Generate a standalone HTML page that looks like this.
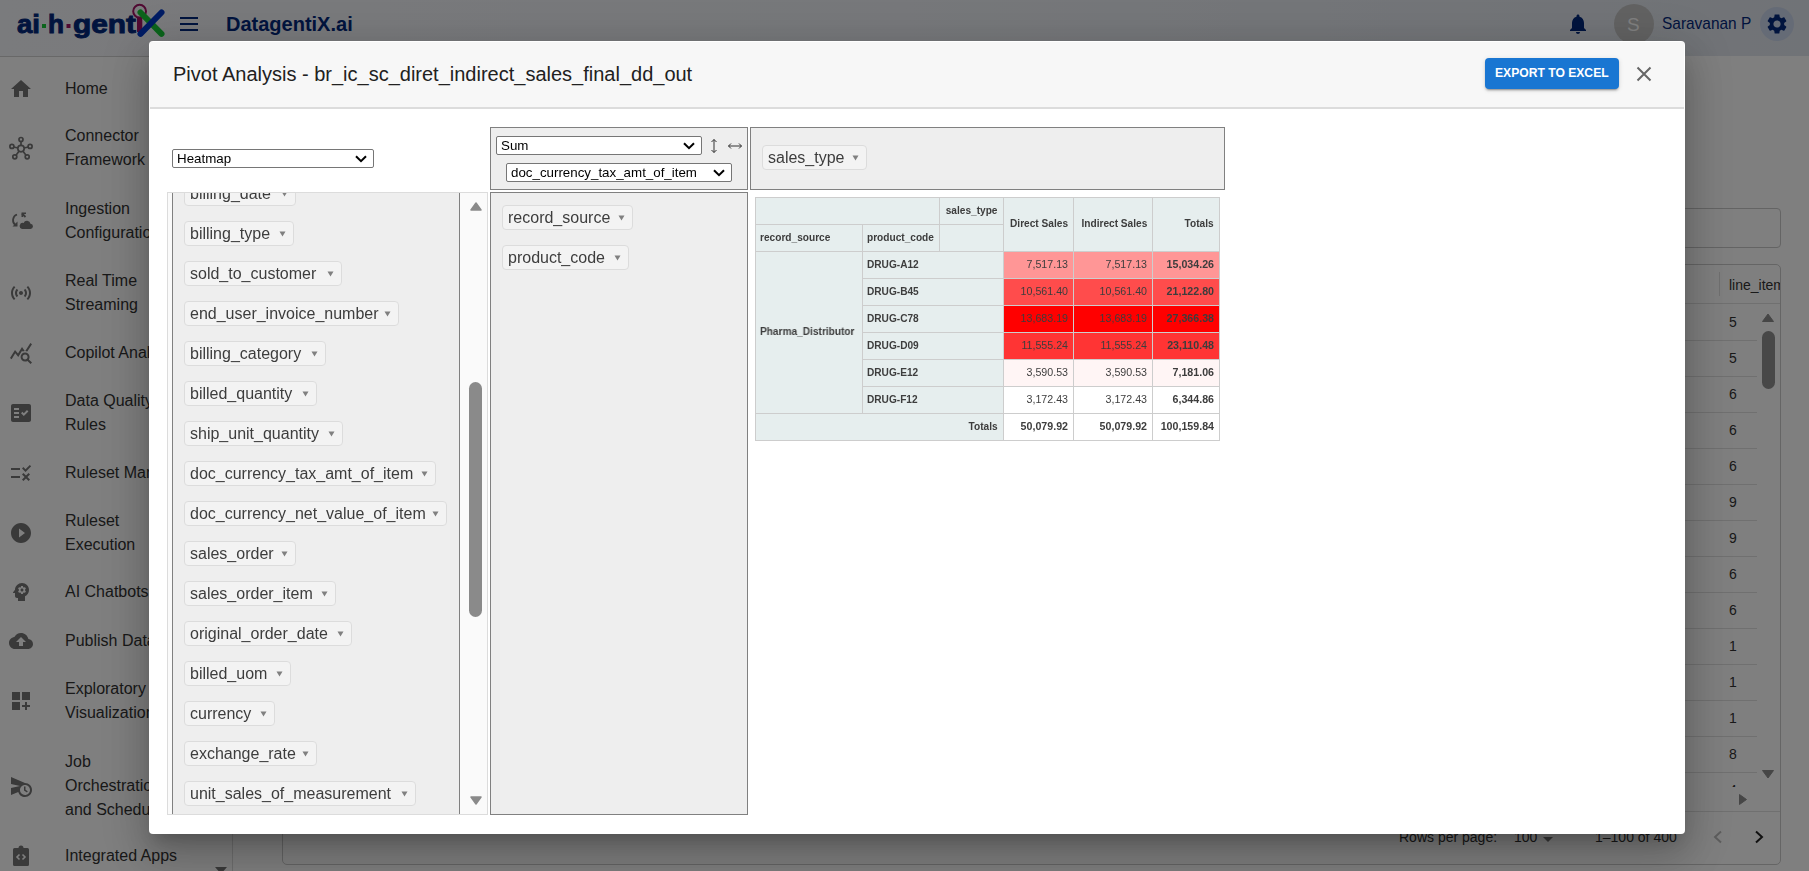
<!DOCTYPE html>
<html><head><meta charset="utf-8">
<style>
*{box-sizing:border-box;}
html,body{margin:0;padding:0;width:1809px;height:871px;overflow:hidden;background:#fff;font-family:"Liberation Sans",sans-serif;}
.a{position:absolute;}
.t{position:absolute;white-space:nowrap;line-height:1;}
#app{position:absolute;left:0;top:0;width:1809px;height:871px;background:#fff;}
#hdr{position:absolute;left:0;top:0;width:1809px;height:56px;background:linear-gradient(90deg,#f5f6fa 0%,#eef1f6 50%,#e1e6ee 100%);}
#side{position:absolute;left:0;top:56px;width:233px;height:815px;background:#fff;border-right:1px solid #dcdcdc;border-top:1px solid #d0d0d0;}
.nav{position:absolute;left:65px;font-size:16px;line-height:24px;color:#333;white-space:nowrap;}
.nic{position:absolute;left:9px;width:24px;height:24px;}
.nic{fill:#747474;}
#overlay{position:absolute;left:0;top:0;width:1809px;height:871px;background:rgba(0,0,0,0.5);}
#modal{position:absolute;left:149px;top:41px;width:1536px;height:793px;background:#fff;border-radius:4px;
 box-shadow:0px 11px 15px -7px rgba(0,0,0,0.2),0px 24px 38px 3px rgba(0,0,0,0.14),0px 9px 46px 8px rgba(0,0,0,0.12);overflow:hidden;}
#mhead{position:absolute;left:0;top:0;width:1536px;height:67px;background:#f7f7f7;border-bottom:2px solid #e2e2e2;}
.navy{color:#03287c;}
.row5{position:absolute;left:1729px;font-size:14px;color:#333;}
.rline{position:absolute;left:282px;width:1475px;height:1px;background:#e0e0e0;}

#mhead{position:absolute;left:1px;top:1px;width:1534px;height:67px;background:#f7f7f7;border-bottom:2px solid #dcdcdc;}
.sel{position:absolute;background:#fff;border:1px solid #767676;border-radius:2px;font-size:13.33px;color:#000;line-height:17px;padding-left:4px;white-space:nowrap;}
.sel svg{position:absolute;right:6px;top:5px;}
.cell{position:absolute;background:#eeeeee;border:1px solid #808080;}
.pill{position:absolute;height:25px;background:#f3f3f3;border:1px solid #dcdcdc;border-radius:4px;font-size:16px;color:#3d3d3d;white-space:nowrap;line-height:24px;padding-left:5px;}
.pill .tri{display:block;}
.pt{position:absolute;}
.hb{position:absolute;background:#e6eeee;}
.ln{position:absolute;background:#cdcdcd;}
.tx{position:absolute;white-space:nowrap;font-size:10.67px;line-height:1;color:#3d3d3d;}
.b{font-weight:bold;transform:scaleX(0.95);}
.nb{font-weight:bold;}
.tx[style*='right']{transform-origin:100% 0;}
.tx[style*='left']{transform-origin:0 0;}

</style></head><body>
<div id="app">
  <div id="hdr">
    <svg class="a" style="left:0;top:0" width="180" height="56" viewBox="0 0 180 56">
      <g fill="#03287c" stroke="#03287c" stroke-width="0.9">
        <text x="17" y="32.6" font-family="Liberation Sans" font-weight="bold" font-size="25" textLength="23" lengthAdjust="spacingAndGlyphs">ai</text>
        <text x="48" y="32.6" font-family="Liberation Sans" font-weight="bold" font-size="25" textLength="16" lengthAdjust="spacingAndGlyphs">h</text>
        <text x="73" y="32.6" font-family="Liberation Sans" font-weight="bold" font-size="25" textLength="63" lengthAdjust="spacingAndGlyphs">gent</text>
      </g>
      <rect x="42" y="24" width="4" height="4" fill="#18c838"/>
      <rect x="66.5" y="24" width="4" height="4" fill="#a01464"/>
      <rect x="137" y="18" width="5.3" height="14" fill="#a01464"/>
      <circle cx="139.6" cy="11.2" r="6.4" fill="none" stroke="#a01464" stroke-width="2"/>
      <line x1="140.5" y1="12.5" x2="161.5" y2="33.8" stroke="#18c838" stroke-width="6" stroke-linecap="round"/>
      <line x1="161.5" y1="12.5" x2="140.5" y2="33.8" stroke="#0038c8" stroke-width="6" stroke-linecap="round"/>
    </svg>
    <div class="a" style="left:180px;top:17px;width:18px;height:2px;background:#03287c"></div>
    <div class="a" style="left:180px;top:23px;width:18px;height:2px;background:#03287c"></div>
    <div class="a" style="left:180px;top:29px;width:18px;height:2px;background:#03287c"></div>
    <div class="t navy" id="brand" style="left:226px;top:14px;font-size:20px;font-weight:bold;">DatagentiX.ai</div>
    <svg class="a" style="left:1566px;top:12px" width="24" height="24" viewBox="0 0 24 24"><path fill="#03287c" d="M12 22c1.1 0 2-.9 2-2h-4c0 1.1.89 2 2 2zm6-6v-5c0-3.07-1.64-5.64-4.5-6.32V4c0-.83-.67-1.5-1.5-1.5s-1.5.67-1.5 1.5v.68C7.63 5.36 6 7.92 6 11v5l-2 2v1h16v-1l-2-2z"/></svg>
    <div class="a" style="left:1614px;top:4px;width:40px;height:40px;border-radius:50%;background:#c4c4c4;"></div>
    <div class="t" style="left:1627px;top:15px;font-size:19px;color:#fff;">S</div>
    <div class="t navy" id="uname" style="left:1662px;top:15px;font-size:17px;transform:scaleX(0.908);transform-origin:0 0;">Saravanan P</div>
    <div class="a" style="left:1760px;top:7px;width:34px;height:34px;border-radius:50%;background:#cbd6ec;"></div>
    <svg class="a" style="left:1765px;top:12px" width="24" height="24" viewBox="0 0 24 24"><path fill="#03287c" d="M19.14 12.94c.04-.3.06-.61.06-.94 0-.32-.02-.64-.07-.94l2.03-1.58c.18-.14.23-.41.12-.61l-1.92-3.32c-.12-.22-.37-.29-.59-.22l-2.39.96c-.5-.38-1.03-.7-1.62-.94l-.36-2.54c-.04-.24-.24-.41-.48-.41h-3.84c-.24 0-.43.17-.47.41l-.36 2.54c-.59.24-1.13.57-1.62.94l-2.39-.96c-.22-.08-.47 0-.59.22L2.74 8.87c-.12.21-.08.47.12.61l2.03 1.58c-.05.3-.09.63-.09.94s.02.64.07.94l-2.03 1.58c-.18.14-.23.41-.12.61l1.92 3.32c.12.22.37.29.59.22l2.39-.96c.5.38 1.03.7 1.62.94l.36 2.54c.05.24.24.41.48.41h3.84c.24 0 .44-.17.47-.41l.36-2.54c.59-.24 1.13-.56 1.62-.94l2.39.96c.22.08.47 0 .59-.22l1.92-3.32c.12-.22.07-.47-.12-.61l-2.01-1.58zM12 15.6c-1.98 0-3.6-1.62-3.6-3.6s1.62-3.6 3.6-3.6 3.6 1.62 3.6 3.6-1.62 3.6-3.6 3.6z"/></svg>
  </div>
  <div id="side">
    <svg class="nic" style="top:19.5px" viewBox="0 0 24 24"><path d="M10 20v-6h4v6h5v-8h3L12 3 2 12h3v8z"/></svg>
    <div class="nav" style="top:19.5px">Home</div>

    <svg class="nic" style="top:79px" viewBox="0 0 24 24"><g style="fill:none" stroke="#747474" stroke-width="1.7"><circle cx="12" cy="12.6" r="3.2"/><circle cx="12" cy="3.5" r="2"/><circle cx="2.9" cy="10.4" r="2"/><circle cx="21.1" cy="10.4" r="2"/><circle cx="5.8" cy="20.8" r="2"/><circle cx="18.2" cy="20.8" r="2"/><path d="M12 5.5V9.4M4.8 11L8.9 12M19.2 11L15.1 12M7 19.2L10 15.3M17 19.2L14 15.3"/></g></svg>
    <div class="nav" style="top:67.0px">Connector<br>Framework</div>

    <svg class="nic" style="top:152px" viewBox="0 0 24 24"><g style="fill:none" stroke="#747474" stroke-width="1.8"><path d="M8 5.5A6 6 0 0 0 6.5 16"/><path d="M13 4.5l3.5 3.5"/></g><path d="M3.5 17.5h5v-5z" transform="rotate(0)"/><path d="M12.5 3.5h4.5v1.6h-2.9v2.9h-1.6z"/><path d="M13 20h8.2a2.6 2.6 0 0 0 .3-5.2 3.6 3.6 0 0 0-6.9-.8A2.9 2.9 0 0 0 13 20z"/></svg>
    <div class="nav" style="top:140.0px">Ingestion<br>Configuration</div>

    <svg class="nic" style="top:223.7px" viewBox="0 0 24 24"><path d="M7.76 16.24C6.67 15.16 6 13.66 6 12s.67-3.16 1.76-4.24l1.42 1.42C8.45 9.9 8 10.9 8 12c0 1.1.45 2.1 1.17 2.83l-1.41 1.41zm8.48 0C17.33 15.16 18 13.66 18 12s-.67-3.16-1.76-4.24l-1.42 1.42C15.55 9.9 16 10.9 16 12c0 1.1-.45 2.1-1.17 2.83l1.41 1.41zM12 10c-1.1 0-2 .9-2 2s.9 2 2 2 2-.9 2-2-.9-2-2-2zm8 2c0 2.21-.9 4.21-2.35 5.65l1.42 1.42C20.88 17.26 22 14.76 22 12s-1.12-5.26-2.93-7.07l-1.42 1.42C19.1 7.79 20 9.79 20 12zM6.35 6.35L4.93 4.93C3.12 6.74 2 9.24 2 12s1.12 5.26 2.93 7.07l1.42-1.42C4.9 16.21 4 14.21 4 12s.9-4.21 2.35-5.65z"/></svg>
    <div class="nav" style="top:211.7px">Real Time<br>Streaming</div>

    <svg class="nic" style="top:284px;left:8.5px" viewBox="0 0 24 24"><path d="M19.88 18.47c.44-.7.7-1.51.7-2.39 0-2.49-2.01-4.5-4.5-4.5s-4.5 2.01-4.5 4.5 2.01 4.5 4.49 4.5c.88 0 1.7-.26 2.39-.7L21.58 23 23 21.58l-3.12-3.11zm-3.8.11c-1.38 0-2.5-1.12-2.5-2.5s1.12-2.5 2.5-2.5 2.5 1.12 2.5 2.5-1.12 2.5-2.5 2.5zm-.36-8.5c-.74.02-1.45.18-2.1.45l-.55-.83-3.8 6.18-3.01-3.52-3.63 5.81L1 17l5-8 3 3.5L13 6l2.72 4.08zm2.59.5c-.64-.28-1.33-.45-2.05-.49L21.38 2 23 3.18l-4.69 7.4z"/></svg>
    <div class="nav" style="top:284.0px">Copilot Analytics</div>

    <svg class="nic" style="top:343.6px" viewBox="0 0 24 24"><path d="M20 3H4c-1.1 0-2 .9-2 2v14c0 1.1.9 2 2 2h16c1.1 0 2-.9 2-2V5c0-1.1-.9-2-2-2zM10 17H5v-2h5v2zm0-4H5v-2h5v2zm0-4H5V7h5v2zm4.82 6L12 12.16l1.41-1.41 1.41 1.42L17.99 9l1.42 1.42L14.82 15z"/></svg>
    <div class="nav" style="top:331.6px">Data Quality<br>Rules</div>

    <svg class="nic" style="top:404px" viewBox="0 0 24 24"><path d="M16.54 11L13 7.46l1.41-1.41 2.12 2.12 4.24-4.24 1.41 1.41L16.54 11zM11 7H2v2h9V7zm10 6.41L19.59 12 17 14.59 14.41 12 13 13.41 15.59 16 13 18.59 14.41 20 17 17.41 19.59 20 21 18.59 18.41 16 21 13.41zM11 15H2v2h9v-2z"/></svg>
    <div class="nav" style="top:404.0px">Ruleset Management</div>

    <svg class="nic" style="top:464px" viewBox="0 0 24 24"><path d="M12 2C6.48 2 2 6.48 2 12s4.48 10 10 10 10-4.48 10-10S17.52 2 12 2zm-2 14.5v-9l6 4.5-6 4.5z"/></svg>
    <div class="nav" style="top:452.0px">Ruleset<br>Execution</div>

    <svg class="nic" style="top:523px" viewBox="0 0 24 24"><path d="M13 3C9.23 3 6.19 5.95 6 9.66l-1.92 2.53c-.24.31 0 .81.42.81H6v3c0 1.11.89 2 2 2h1v3h7v-4.69c2.37-1.12 4-3.51 4-6.31 0-3.86-3.12-7-7-7zm3 7c0 .13-.01.26-.02.39l.83.66c.08.06.1.16.05.25l-.8 1.39c-.05.09-.16.12-.24.09l-.99-.4c-.21.16-.43.29-.67.39L14 13.83c-.01.1-.1.17-.2.17h-1.6c-.1 0-.18-.07-.2-.17l-.15-1.06c-.25-.1-.47-.23-.68-.39l-.99.4c-.09.03-.2 0-.25-.09l-.8-1.39c-.05-.08-.03-.19.05-.25l.84-.66c-.01-.13-.02-.26-.02-.39s.02-.27.04-.39l-.85-.66c-.08-.06-.1-.16-.05-.26l.8-1.38c.05-.09.15-.12.24-.09l1 .4c.2-.15.43-.29.67-.39L12 6.17c.02-.1.1-.17.2-.17h1.6c.1 0 .18.07.2.17l.15 1.06c.24.1.46.23.67.39l1-.4c.09-.03.2 0 .24.09l.8 1.38c.05.09.03.2-.05.26l-.85.66c.03.12.04.25.04.39zM13 8.5c-.83 0-1.5.67-1.5 1.5s.67 1.5 1.5 1.5 1.5-.67 1.5-1.5-.67-1.5-1.5-1.5z"/></svg>
    <div class="nav" style="top:523.0px">AI Chatbots</div>

    <svg class="nic" style="top:572px" viewBox="0 0 24 24"><path d="M19.35 10.04C18.67 6.59 15.64 4 12 4 9.11 4 6.6 5.64 5.35 8.04 2.34 8.36 0 10.91 0 14c0 3.31 2.69 6 6 6h13c2.76 0 5-2.24 5-5 0-2.64-2.05-4.78-4.65-4.96zM14 13v4h-4v-4H7l5-5 5 5h-3z"/></svg>
    <div class="nav" style="top:572.0px">Publish Data</div>

    <svg class="nic" style="top:632px" viewBox="0 0 24 24"><path d="M3 3h8v8H3zm10 0h8v8h-8zM3 13h8v8H3zm15 0h-2v3h-3v2h3v3h2v-3h3v-2h-3z"/></svg>
    <div class="nav" style="top:620.0px">Exploratory<br>Visualization</div>

    <svg class="nic" style="top:716.5px" viewBox="0 0 24 24"><path d="M16.5 12.5H15v4l3 2 .75-1.23-2.25-1.52V12.5zM16 9L2 3v7l9 2-9 2v7l7.27-3.11C10.09 20.83 12.79 23 16 23c3.86 0 7-3.14 7-7s-3.14-7-7-7zm0 12c-2.75 0-4.98-2.22-5-4.97v-.07c.02-2.74 2.25-4.97 5-4.97 2.76 0 5 2.24 5 5S18.76 21 16 21z"/></svg>
    <div class="nav" style="top:692.5px">Job<br>Orchestration<br>and Scheduling</div>

    <svg class="nic" style="top:787px" viewBox="0 0 24 24"><path d="M5.5 4h4A2.5 2.5 0 0 1 14.5 4h4a1.5 1.5 0 0 1 1.5 1.5v15a1.5 1.5 0 0 1-1.5 1.5h-13A1.5 1.5 0 0 1 4 20.5v-15A1.5 1.5 0 0 1 5.5 4z"/><path d="M10.5 10.5L8 13l2.5 2.5M13.5 10.5L16 13l-2.5 2.5" style="fill:none" stroke="#fff" stroke-width="1.6"/></svg>
    <div class="nav" style="top:787.0px">Integrated Apps</div>
    <svg class="a" style="left:214px;top:808px" width="14" height="10"><path d="M1 2h12l-6 7z" fill="#747474"/></svg>
  </div>
  <div id="main">
    <div class="a" style="left:282px;top:208px;width:1499px;height:40px;border:1px solid #c8c8c8;border-radius:4px;"></div>
    <div class="a" style="left:282px;top:264px;width:1499px;height:601px;border:1px solid #cacaca;border-radius:5px;overflow:hidden;">
      <div class="a" style="left:1436px;top:7px;width:1px;height:24px;background:#e0e0e0"></div>
      <div class="t" style="left:1446px;top:13px;font-size:14px;color:#333;">line_item_no</div>
      <div class="a" style="left:0;top:38px;width:1497px;height:1px;background:#e0e0e0"></div>
      <div class="a" style="left:0;top:39px;width:1474px;height:483px;overflow:hidden;">
        <div class="t" style="left:1446px;top:11px;font-size:14px;color:#333;">5</div>
        <div class="a" style="left:0;top:36px;width:1474px;height:1px;background:#e0e0e0"></div>
        <div class="t" style="left:1446px;top:47px;font-size:14px;color:#333;">5</div>
        <div class="a" style="left:0;top:72px;width:1474px;height:1px;background:#e0e0e0"></div>
        <div class="t" style="left:1446px;top:83px;font-size:14px;color:#333;">6</div>
        <div class="a" style="left:0;top:108px;width:1474px;height:1px;background:#e0e0e0"></div>
        <div class="t" style="left:1446px;top:119px;font-size:14px;color:#333;">6</div>
        <div class="a" style="left:0;top:144px;width:1474px;height:1px;background:#e0e0e0"></div>
        <div class="t" style="left:1446px;top:155px;font-size:14px;color:#333;">6</div>
        <div class="a" style="left:0;top:180px;width:1474px;height:1px;background:#e0e0e0"></div>
        <div class="t" style="left:1446px;top:191px;font-size:14px;color:#333;">9</div>
        <div class="a" style="left:0;top:216px;width:1474px;height:1px;background:#e0e0e0"></div>
        <div class="t" style="left:1446px;top:227px;font-size:14px;color:#333;">9</div>
        <div class="a" style="left:0;top:252px;width:1474px;height:1px;background:#e0e0e0"></div>
        <div class="t" style="left:1446px;top:263px;font-size:14px;color:#333;">6</div>
        <div class="a" style="left:0;top:288px;width:1474px;height:1px;background:#e0e0e0"></div>
        <div class="t" style="left:1446px;top:299px;font-size:14px;color:#333;">6</div>
        <div class="a" style="left:0;top:324px;width:1474px;height:1px;background:#e0e0e0"></div>
        <div class="t" style="left:1446px;top:335px;font-size:14px;color:#333;">1</div>
        <div class="a" style="left:0;top:360px;width:1474px;height:1px;background:#e0e0e0"></div>
        <div class="t" style="left:1446px;top:371px;font-size:14px;color:#333;">1</div>
        <div class="a" style="left:0;top:396px;width:1474px;height:1px;background:#e0e0e0"></div>
        <div class="t" style="left:1446px;top:407px;font-size:14px;color:#333;">1</div>
        <div class="a" style="left:0;top:432px;width:1474px;height:1px;background:#e0e0e0"></div>
        <div class="t" style="left:1446px;top:443px;font-size:14px;color:#333;">8</div>
        <div class="a" style="left:0;top:468px;width:1474px;height:1px;background:#e0e0e0"></div>
        <div class="t" style="left:1446px;top:479px;font-size:14px;color:#333;">4</div>
        <div class="a" style="left:0;top:504px;width:1474px;height:1px;background:#e0e0e0"></div>
      </div>
      <svg class="a" style="left:1478px;top:48px" width="14" height="10"><path d="M1.5 8.5h11L7 1z" fill="#8c8c8c" stroke="#8c8c8c" stroke-linejoin="round"/></svg>
      <div class="a" style="left:1479px;top:66px;width:13px;height:58px;border-radius:6.5px;background:#909090"></div>
      <svg class="a" style="left:1478px;top:504px" width="14" height="10"><path d="M1.5 1.5h11L7 9z" fill="#8c8c8c" stroke="#8c8c8c" stroke-linejoin="round"/></svg>
      <svg class="a" style="left:1455px;top:528px" width="10" height="13"><path d="M1.5 1.5v10L8.5 6.5z" fill="#8c8c8c" stroke="#8c8c8c" stroke-linejoin="round"/></svg>
      <div class="a" style="left:0;top:546px;width:1497px;height:1px;background:#e0e0e0"></div>
      <div class="t" id="rpp" style="left:1116px;top:565px;font-size:14px;color:#333;">Rows per page:</div>
      <div class="t" style="left:1231px;top:565px;font-size:14px;color:#333;">100</div>
      <svg class="a" style="left:1259px;top:571px" width="12" height="8"><path d="M1 1h10L6 6z" fill="#757575"/></svg>
      <div class="t" id="pg" style="left:1312px;top:565px;font-size:14px;color:#333;">1–100 of 400</div>
      <svg class="a" style="left:1428px;top:565px" width="14" height="14" viewBox="0 0 14 14"><path d="M10 1.5L4 7l6 5.5" fill="none" stroke="#bdbdbd" stroke-width="2"/></svg>
      <svg class="a" style="left:1469px;top:565px" width="14" height="14" viewBox="0 0 14 14"><path d="M4 1.5L10 7l-6 5.5" fill="none" stroke="#222" stroke-width="2"/></svg>
    </div>
  </div>
</div>
<div id="overlay"></div>
<div id="modal">
<div id="mhead"></div>
<div class="t" id="title" style="left:24px;top:23px;font-size:20px;color:#212121;">Pivot Analysis - br_ic_sc_diret_indirect_sales_final_dd_out</div>
<div class="a" style="left:1336px;top:17px;width:134px;height:31px;background:#1976d2;border-radius:4px;box-shadow:0px 3px 1px -2px rgba(0,0,0,0.2),0px 2px 2px 0px rgba(0,0,0,0.14),0px 1px 5px 0px rgba(0,0,0,0.12);"></div>
<div class="t" id="exp" style="left:1346px;top:25px;font-size:13.5px;font-weight:bold;color:#fff;transform:scaleX(0.898);transform-origin:0 0;">EXPORT TO EXCEL</div>
<svg class="a" style="left:1487px;top:25px" width="16" height="16" viewBox="0 0 16 16"><path d="M1.5 1.5L14.5 14.5M14.5 1.5L1.5 14.5" stroke="#666" stroke-width="2"/></svg>
<div class="a" style="left:0;top:0;width:1536px;height:793px;will-change:transform;">
<div class="sel"  style="left:23px;top:108px;width:202px;height:19px;">Heatmap<svg width="12" height="8" viewBox="0 0 12 8"><path d="M1 1.2l5 5 5-5" fill="none" stroke="#000" stroke-width="2"/></svg></div>
<div class="cell" style="left:341px;top:86px;width:258px;height:63px;"></div>
<div class="sel"  style="left:347px;top:95px;width:206px;height:19px;">Sum<svg width="12" height="8" viewBox="0 0 12 8"><path d="M1 1.2l5 5 5-5" fill="none" stroke="#000" stroke-width="2"/></svg></div>
<svg class="a" style="left:560px;top:97px" width="10" height="16" viewBox="0 0 10 16"><path d="M5 1.5v13M2.5 4l2.5-2.5 2.5 2.5M2.5 12l2.5 2.5 2.5-2.5" fill="none" stroke="#333" stroke-width="1"/></svg>
<svg class="a" style="left:578px;top:100px" width="16" height="10" viewBox="0 0 16 10"><path d="M1.5 5h13M4 2.5l-2.5 2.5 2.5 2.5M12 2.5l2.5 2.5-2.5 2.5" fill="none" stroke="#333" stroke-width="1"/></svg>
<div class="sel"  style="left:357px;top:122px;width:226px;height:19px;">doc_currency_tax_amt_of_item<svg width="12" height="8" viewBox="0 0 12 8"><path d="M1 1.2l5 5 5-5" fill="none" stroke="#000" stroke-width="2"/></svg></div>
<div class="cell" style="left:601px;top:86px;width:475px;height:63px;"></div>
<div class="pill" style="left:613px;top:104px;width:105px;">sales_type<span class="pt" style="left:89px;top:9px"><svg class="tri" width="7" height="6" viewBox="0 0 7 6"><path d="M0.5 0.5h6L3.5 5.5z" fill="#808080"/></svg></span></div>
<div class="a" style="left:18px;top:151px;width:321px;height:623px;border:1px solid #dcdcdc;background:#fafafa;overflow:hidden;">
<div class="a" style="left:4px;top:0;width:288px;height:621px;background:#eeeeee;border-left:1px solid #808080;border-right:1px solid #808080;"></div>
</div>
<svg class="a" style="left:321px;top:160px" width="12" height="10" viewBox="0 0 12 10"><path d="M1 9h10L6 2z" fill="#8a8a8a" stroke="#8a8a8a" stroke-linejoin="round" stroke-width="1.5"/></svg>
<div class="a" style="left:320px;top:341px;width:13px;height:235px;border-radius:6.5px;background:#8a8a8a"></div>
<svg class="a" style="left:321px;top:755px" width="12" height="10" viewBox="0 0 12 10"><path d="M1 1h10L6 8z" fill="#8a8a8a" stroke="#8a8a8a" stroke-linejoin="round" stroke-width="1.5"/></svg>
<div class="a" style="left:24px;top:152px;width:286px;height:621px;overflow:hidden;will-change:transform;">
<div class="pill" style="left:11px;top:-12px;width:112px;">billing_date<span class="pt" style="left:96px;top:9px"><svg class="tri" width="7" height="6" viewBox="0 0 7 6"><path d="M0.5 0.5h6L3.5 5.5z" fill="#808080"/></svg></span></div>
<div class="pill" style="left:11px;top:28px;width:110px;">billing_type<span class="pt" style="left:94px;top:9px"><svg class="tri" width="7" height="6" viewBox="0 0 7 6"><path d="M0.5 0.5h6L3.5 5.5z" fill="#808080"/></svg></span></div>
<div class="pill" style="left:11px;top:68px;width:158px;">sold_to_customer<span class="pt" style="left:142px;top:9px"><svg class="tri" width="7" height="6" viewBox="0 0 7 6"><path d="M0.5 0.5h6L3.5 5.5z" fill="#808080"/></svg></span></div>
<div class="pill" style="left:11px;top:108px;width:215px;">end_user_invoice_number<span class="pt" style="left:199px;top:9px"><svg class="tri" width="7" height="6" viewBox="0 0 7 6"><path d="M0.5 0.5h6L3.5 5.5z" fill="#808080"/></svg></span></div>
<div class="pill" style="left:11px;top:148px;width:142px;">billing_category<span class="pt" style="left:126px;top:9px"><svg class="tri" width="7" height="6" viewBox="0 0 7 6"><path d="M0.5 0.5h6L3.5 5.5z" fill="#808080"/></svg></span></div>
<div class="pill" style="left:11px;top:188px;width:133px;">billed_quantity<span class="pt" style="left:117px;top:9px"><svg class="tri" width="7" height="6" viewBox="0 0 7 6"><path d="M0.5 0.5h6L3.5 5.5z" fill="#808080"/></svg></span></div>
<div class="pill" style="left:11px;top:228px;width:159px;">ship_unit_quantity<span class="pt" style="left:143px;top:9px"><svg class="tri" width="7" height="6" viewBox="0 0 7 6"><path d="M0.5 0.5h6L3.5 5.5z" fill="#808080"/></svg></span></div>
<div class="pill" style="left:11px;top:268px;width:252px;">doc_currency_tax_amt_of_item<span class="pt" style="left:236px;top:9px"><svg class="tri" width="7" height="6" viewBox="0 0 7 6"><path d="M0.5 0.5h6L3.5 5.5z" fill="#808080"/></svg></span></div>
<div class="pill" style="left:11px;top:308px;width:263px;">doc_currency_net_value_of_item<span class="pt" style="left:247px;top:9px"><svg class="tri" width="7" height="6" viewBox="0 0 7 6"><path d="M0.5 0.5h6L3.5 5.5z" fill="#808080"/></svg></span></div>
<div class="pill" style="left:11px;top:348px;width:112px;">sales_order<span class="pt" style="left:96px;top:9px"><svg class="tri" width="7" height="6" viewBox="0 0 7 6"><path d="M0.5 0.5h6L3.5 5.5z" fill="#808080"/></svg></span></div>
<div class="pill" style="left:11px;top:388px;width:152px;">sales_order_item<span class="pt" style="left:136px;top:9px"><svg class="tri" width="7" height="6" viewBox="0 0 7 6"><path d="M0.5 0.5h6L3.5 5.5z" fill="#808080"/></svg></span></div>
<div class="pill" style="left:11px;top:428px;width:168px;">original_order_date<span class="pt" style="left:152px;top:9px"><svg class="tri" width="7" height="6" viewBox="0 0 7 6"><path d="M0.5 0.5h6L3.5 5.5z" fill="#808080"/></svg></span></div>
<div class="pill" style="left:11px;top:468px;width:107px;">billed_uom<span class="pt" style="left:91px;top:9px"><svg class="tri" width="7" height="6" viewBox="0 0 7 6"><path d="M0.5 0.5h6L3.5 5.5z" fill="#808080"/></svg></span></div>
<div class="pill" style="left:11px;top:508px;width:91px;">currency<span class="pt" style="left:75px;top:9px"><svg class="tri" width="7" height="6" viewBox="0 0 7 6"><path d="M0.5 0.5h6L3.5 5.5z" fill="#808080"/></svg></span></div>
<div class="pill" style="left:11px;top:548px;width:133px;">exchange_rate<span class="pt" style="left:117px;top:9px"><svg class="tri" width="7" height="6" viewBox="0 0 7 6"><path d="M0.5 0.5h6L3.5 5.5z" fill="#808080"/></svg></span></div>
<div class="pill" style="left:11px;top:588px;width:232px;">unit_sales_of_measurement<span class="pt" style="left:216px;top:9px"><svg class="tri" width="7" height="6" viewBox="0 0 7 6"><path d="M0.5 0.5h6L3.5 5.5z" fill="#808080"/></svg></span></div>
</div>
<div class="cell" style="left:341px;top:151px;width:258px;height:623px;"></div>
<div class="pill" style="left:353px;top:164px;width:131px;">record_source<span class="pt" style="left:115px;top:9px"><svg class="tri" width="7" height="6" viewBox="0 0 7 6"><path d="M0.5 0.5h6L3.5 5.5z" fill="#808080"/></svg></span></div>
<div class="pill" style="left:353px;top:204px;width:127px;">product_code<span class="pt" style="left:111px;top:9px"><svg class="tri" width="7" height="6" viewBox="0 0 7 6"><path d="M0.5 0.5h6L3.5 5.5z" fill="#808080"/></svg></span></div>
<div class="hb" style="left:606px;top:156px;width:465px;height:54px"></div>
<div class="hb" style="left:606px;top:210px;width:248px;height:189px"></div>
<div class="a" style="left:854px;top:210px;width:217px;height:27px;background:rgb(255,150,150)"></div>
<div class="a" style="left:854px;top:237px;width:217px;height:27px;background:rgb(255,76,76)"></div>
<div class="a" style="left:854px;top:264px;width:217px;height:27px;background:rgb(255,0,0)"></div>
<div class="a" style="left:854px;top:291px;width:217px;height:27px;background:rgb(255,52,52)"></div>
<div class="a" style="left:854px;top:318px;width:217px;height:27px;background:rgb(255,245,245)"></div>
<div class="a" style="left:854px;top:345px;width:217px;height:27px;background:#fff"></div>
<div class="a" style="left:854px;top:372px;width:217px;height:27px;background:#fff"></div>
<div class="ln" style="left:606px;top:156px;width:465px;height:1px"></div>
<div class="ln" style="left:606px;top:183px;width:249px;height:1px"></div>
<div class="ln" style="left:606px;top:210px;width:465px;height:1px"></div>
<div class="ln" style="left:713px;top:237px;width:358px;height:1px"></div>
<div class="ln" style="left:713px;top:264px;width:358px;height:1px"></div>
<div class="ln" style="left:713px;top:291px;width:358px;height:1px"></div>
<div class="ln" style="left:713px;top:318px;width:358px;height:1px"></div>
<div class="ln" style="left:713px;top:345px;width:358px;height:1px"></div>
<div class="ln" style="left:713px;top:372px;width:358px;height:1px"></div>
<div class="ln" style="left:606px;top:372px;width:465px;height:1px"></div>
<div class="ln" style="left:606px;top:399px;width:465px;height:1px"></div>
<div class="ln" style="left:606px;top:156px;width:1px;height:244px"></div>
<div class="ln" style="left:713px;top:183px;width:1px;height:190px"></div>
<div class="ln" style="left:790px;top:156px;width:1px;height:55px"></div>
<div class="ln" style="left:854px;top:156px;width:1px;height:244px"></div>
<div class="ln" style="left:924px;top:156px;width:1px;height:244px"></div>
<div class="ln" style="left:1003px;top:156px;width:1px;height:244px"></div>
<div class="ln" style="left:1070px;top:156px;width:1px;height:244px"></div>
<div class="tx b"  style="right:687px;top:163.5px;font-size:10.67px">sales_type</div>
<div class="tx b"  style="left:611px;top:190.5px;font-size:10.67px">record_source</div>
<div class="tx b"  style="left:718px;top:190.5px;font-size:10.67px">product_code</div>
<div class="tx b"  style="right:617px;top:176.5px;font-size:10.67px">Direct Sales</div>
<div class="tx b"  style="right:538px;top:176.5px;font-size:10.67px">Indirect Sales</div>
<div class="tx b"  style="right:471px;top:176.5px;font-size:10.67px">Totals</div>
<div class="tx b"  style="left:611px;top:284.5px;font-size:10.67px">Pharma_Distributor</div>
<div class="tx b"  style="left:718px;top:217.5px;font-size:10.67px">DRUG-A12</div>
<div class="tx"  style="right:617px;top:217.5px;font-size:10.67px">7,517.13</div>
<div class="tx"  style="right:538px;top:217.5px;font-size:10.67px">7,517.13</div>
<div class="tx nb"  style="right:471px;top:217.5px;font-size:10.67px">15,034.26</div>
<div class="tx b"  style="left:718px;top:244.5px;font-size:10.67px">DRUG-B45</div>
<div class="tx"  style="right:617px;top:244.5px;font-size:10.67px">10,561.40</div>
<div class="tx"  style="right:538px;top:244.5px;font-size:10.67px">10,561.40</div>
<div class="tx nb"  style="right:471px;top:244.5px;font-size:10.67px">21,122.80</div>
<div class="tx b"  style="left:718px;top:271.5px;font-size:10.67px">DRUG-C78</div>
<div class="tx"  style="right:617px;top:271.5px;font-size:10.67px">13,683.19</div>
<div class="tx"  style="right:538px;top:271.5px;font-size:10.67px">13,683.19</div>
<div class="tx nb"  style="right:471px;top:271.5px;font-size:10.67px">27,366.38</div>
<div class="tx b"  style="left:718px;top:298.5px;font-size:10.67px">DRUG-D09</div>
<div class="tx"  style="right:617px;top:298.5px;font-size:10.67px">11,555.24</div>
<div class="tx"  style="right:538px;top:298.5px;font-size:10.67px">11,555.24</div>
<div class="tx nb"  style="right:471px;top:298.5px;font-size:10.67px">23,110.48</div>
<div class="tx b"  style="left:718px;top:325.5px;font-size:10.67px">DRUG-E12</div>
<div class="tx"  style="right:617px;top:325.5px;font-size:10.67px">3,590.53</div>
<div class="tx"  style="right:538px;top:325.5px;font-size:10.67px">3,590.53</div>
<div class="tx nb"  style="right:471px;top:325.5px;font-size:10.67px">7,181.06</div>
<div class="tx b"  style="left:718px;top:352.5px;font-size:10.67px">DRUG-F12</div>
<div class="tx"  style="right:617px;top:352.5px;font-size:10.67px">3,172.43</div>
<div class="tx"  style="right:538px;top:352.5px;font-size:10.67px">3,172.43</div>
<div class="tx nb"  style="right:471px;top:352.5px;font-size:10.67px">6,344.86</div>
<div class="tx b"  style="right:687px;top:379.5px;font-size:10.67px">Totals</div>
<div class="tx nb"  style="right:617px;top:379.5px;font-size:10.67px">50,079.92</div>
<div class="tx nb"  style="right:538px;top:379.5px;font-size:10.67px">50,079.92</div>
<div class="tx nb"  style="right:471px;top:379.5px;font-size:10.67px">100,159.84</div>
</div>
</div>
</body></html>
